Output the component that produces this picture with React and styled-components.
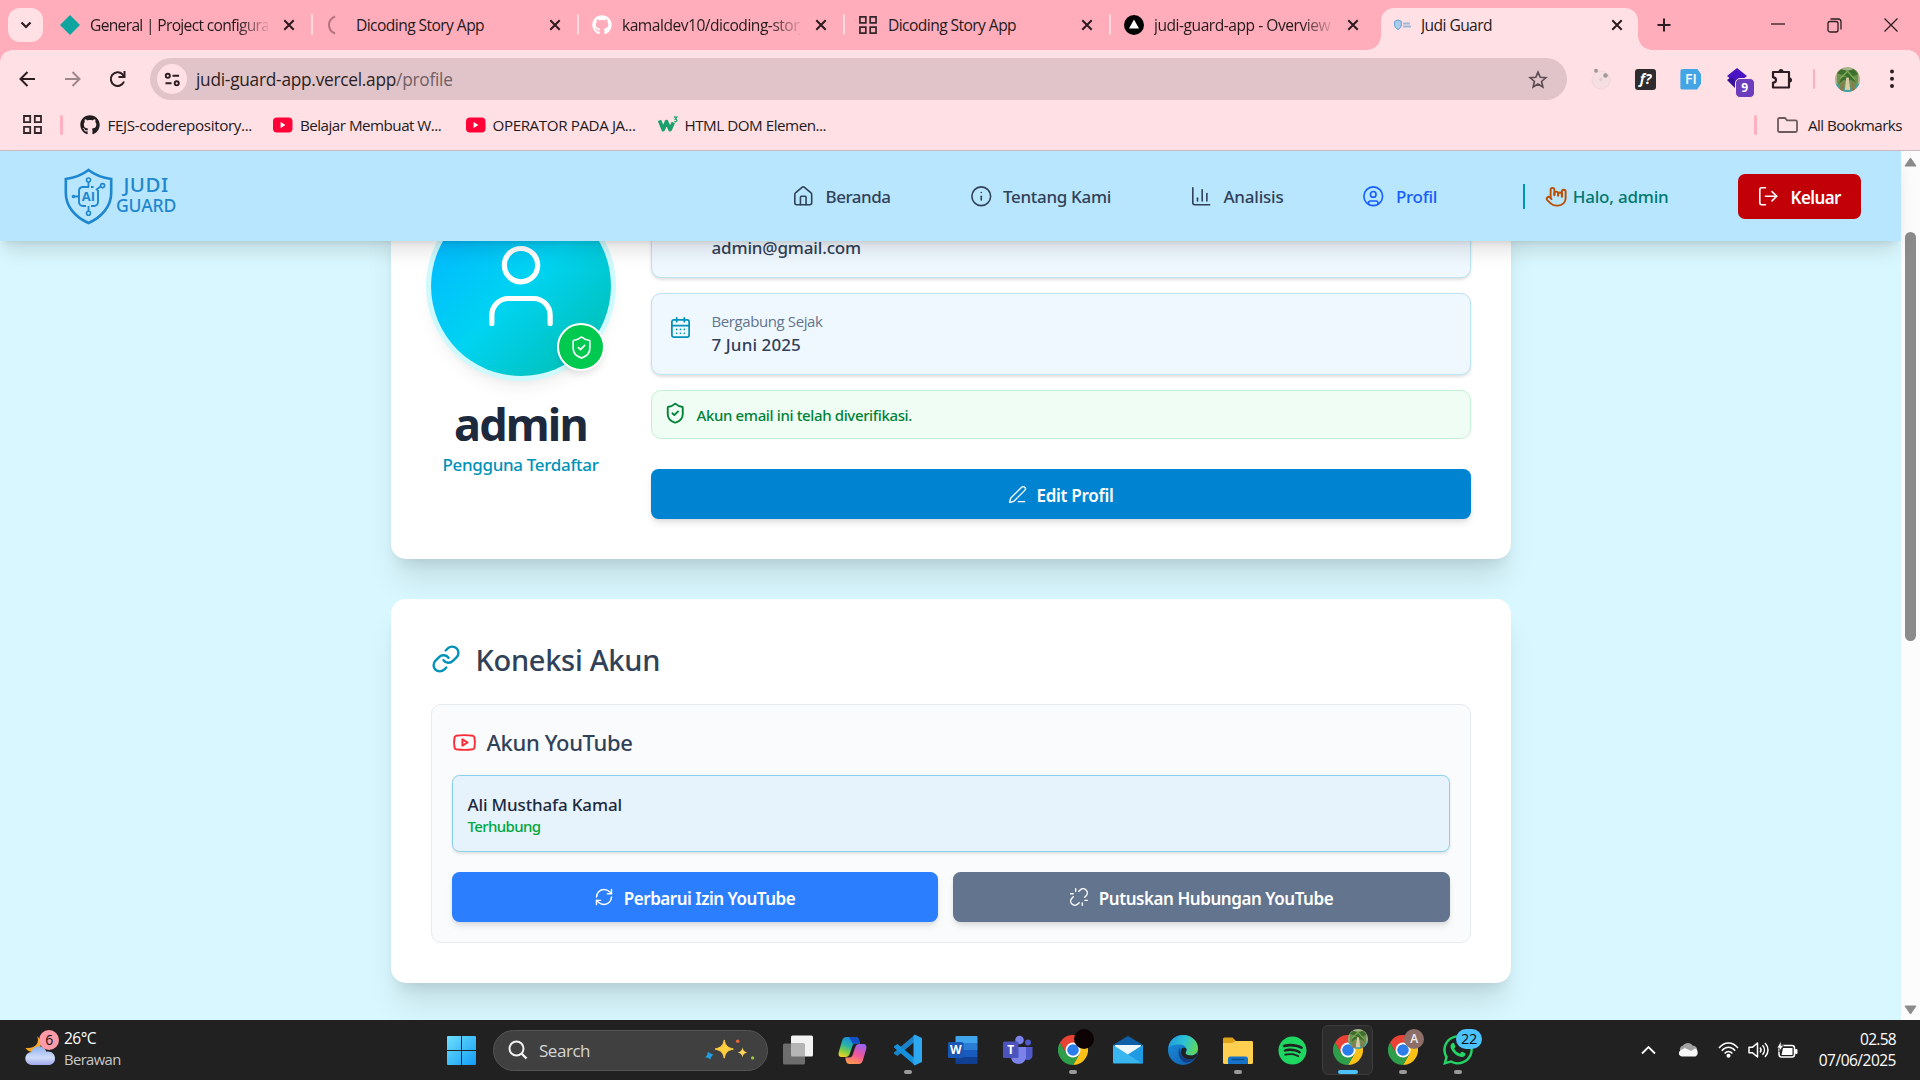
import React from "react";
import styled, { createGlobalStyle, css } from "styled-components";
import {
  House, Info, ChartColumn, CircleUser, HandMetal, LogOut, User, ShieldCheck,
  CalendarDays, PenLine, Link, Youtube, RefreshCw, Unlink,
} from "lucide-react";
import { FaGithub, FaSpotify, FaWhatsapp } from "react-icons/fa";

const GlobalStyle = createGlobalStyle`
  *, *::before, *::after { box-sizing: border-box; }
  body { margin: 0; overflow: hidden; font-family: "Open Sans", "Noto Sans", sans-serif; }
  svg { display: block; flex: none; }
`;

const Screen = styled.div`
  width: 1920px;
  height: 1080px;
  display: flex;
  flex-direction: column;
  overflow: hidden;
`;

const Label = styled.span`
  flex: none;
  white-space: nowrap;
  padding-top: ${(p) => p.$drop || 0}px;
  font-family: ${(p) => (p.$weight ? '"Noto Sans", "Open Sans"' : '"Open Sans", "Noto Sans"')}, sans-serif;
  font-size: ${(p) => p.$size}px;
  font-weight: ${(p) => p.$weight || 400};
  letter-spacing: ${(p) => p.$track || 0}px;
  line-height: ${(p) => p.$line || 24}px;
  color: ${(p) => p.$color || "#231a1c"};
`;

/* ---------- Browser chrome ---------- */

const TabStrip = styled.div`
  flex: none;
  height: 50px;
  display: flex;
  align-items: flex-start;
  background: #ffadbb;
`;

const TabSearch = styled.div`
  width: 35px;
  height: 34px;
  margin: 8px 3px 0 8px;
  display: grid;
  place-items: center;
  border-radius: 12px;
  background: #ffe0e5;
`;

const TabBox = styled.div`
  position: relative;
  flex: none;
  width: 266px;
  height: 50px;
  padding-left: 14px;
  display: flex;
  align-items: center;
  ${(p) => p.$divided && css`
    &::after {
      content: "";
      position: absolute;
      right: -1px;
      top: 14px;
      width: 2px;
      height: 21px;
      border-radius: 1px;
      background: #ffd9df;
    }
  `}
`;

const ActiveTab = styled.div`
  position: relative;
  flex: none;
  width: 257px;
  height: 42px;
  margin: 8px 5px 0 5px;
  padding: 0 0 8px 12px;
  display: flex;
  align-items: center;
  background: #ffe0e5;
  border-radius: 13px 13px 0 0;
  &::before, &::after {
    content: "";
    position: absolute;
    bottom: 0;
    width: 14px;
    height: 14px;
  }
  &::before { left: -14px; background: radial-gradient(circle at 0 0, transparent 13.5px, #ffe0e5 14px); }
  &::after { right: -14px; background: radial-gradient(circle at 100% 0, transparent 13.5px, #ffe0e5 14px); }
`;

const Favicon = styled.div`
  width: 20px;
  height: 20px;
  margin-right: ${(p) => p.$gap || 10}px;
  display: grid;
  place-items: center;
  flex: none;
`;

const TabTitle = styled.div`
  width: ${(p) => p.$width || 178}px;
  overflow: hidden;
  display: flex;
  ${(p) => p.$fade && css`mask-image: linear-gradient(90deg, #000 calc(100% - 30px), transparent calc(100% + 4px));`}
`;

const CloseSlot = styled.div`
  width: 42px;
  display: grid;
  place-items: center;
  margin-bottom: 1px;
`;

const WindowButtons = styled.div`
  margin-left: auto;
  margin-right: 22px;
  height: 50px;
  display: flex;
  align-items: center;
  gap: 42px;
`;

const Toolbar = styled.div`
  flex: none;
  height: 58px;
  padding: 0 16px 0 18px;
  display: flex;
  align-items: center;
  background: #ffe0e5;
  position: relative;
  &::before {
    content: "";
    position: absolute;
    inset: 0 0 auto 0;
    height: 12px;
    z-index: 0;
    background:
      radial-gradient(circle at 12px 12px, transparent 11.5px, #ffadbb 12px) left / 12px 12px no-repeat,
      radial-gradient(circle at 0 12px, transparent 11.5px, #ffadbb 12px) right / 12px 12px no-repeat;
  }
`;

const NavIcons = styled.div`
  width: 132px;
  display: flex;
  gap: 27px;
`;

const Omnibox = styled.div`
  width: 1417px;
  height: 42px;
  padding: 0 19px 0 7px;
  display: flex;
  align-items: center;
  border-radius: 21px;
  background: #e1c4ca;
`;

const SiteInfo = styled.div`
  width: 30px;
  height: 30px;
  margin-right: 9px;
  display: grid;
  place-items: center;
  border-radius: 50%;
  background: #ffe0e5;
`;

const Grow = styled.div`flex: 1;`;

const Extensions = styled.div`
  margin-left: 23px;
  display: flex;
  align-items: center;
`;

const ExtSlot = styled.div`
  position: relative;
  width: 45.2px;
  height: 30px;
  display: flex;
  align-items: center;
`;

const ExtTile = styled.div`
  width: 21px;
  height: 21px;
  display: grid;
  place-items: center;
  border-radius: 3px;
  background: ${(p) => p.$bg};
  color: #fff;
  font: ${(p) => p.$font};
  line-height: 20px;
  clip-path: ${(p) => p.$clip || "none"};
`;

const ExtBadge = styled.div`
  position: absolute;
  left: 9px;
  top: 14px;
  width: 20px;
  height: 20px;
  border: 1px solid #ffe0e5;
  border-radius: 5px;
  background: #6b3dbd;
  color: #fff;
  font: 700 12px/18px "Open Sans", sans-serif;
  text-align: center;
`;

const VRule = styled.div`
  width: 2.5px;
  height: ${(p) => p.$height}px;
  margin: ${(p) => p.$margin || 0};
  border-radius: 2px;
  background: #ffb0be;
`;

const Avatar = styled.div`
  width: ${(p) => p.$size}px;
  height: ${(p) => p.$size}px;
  margin-right: auto;
  overflow: hidden;
  border-radius: 50%;
`;

const Bookmarks = styled.div`
  flex: none;
  height: 43px;
  padding: 0 18px 9px 22.5px;
  display: flex;
  align-items: center;
  background: #ffe0e5;
  border-bottom: 1px solid #cdb9c1;
`;

const Bookmark = styled.div`
  width: ${(p) => p.$width}px;
  display: flex;
  align-items: center;
  gap: ${(p) => p.$gap || 8}px;
`;

/* ---------- Page ---------- */

const Viewport = styled.div`
  flex: none;
  height: 869px;
  display: flex;
`;

const Page = styled.div`
  width: 1901px;
  display: flex;
  flex-direction: column;
  background: #d9f7fe;
`;

const Header = styled.header`
  position: relative;
  z-index: 2;
  flex: none;
  height: 90px;
  padding: 0 40px 0 64px;
  display: flex;
  align-items: center;
  background: #b8e6fe;
  box-shadow: 0 12.5px 18.75px -3.75px rgba(0, 0, 0, 0.12), 0 5px 7.5px -5px rgba(0, 0, 0, 0.12);
`;

const Brand = styled.div`
  display: flex;
  align-items: center;
  gap: 3px;
  width: 728px;
`;

const BrandName = styled.div`
  height: 46px;
  display: flex;
  flex-direction: column;
  align-items: center;
  justify-content: space-between;
  padding: 1px 0 5px;
`;

const NavLinks = styled.nav`
  display: flex;
  gap: 79px;
`;

const NavLink = styled.div`
  display: flex;
  align-items: center;
  gap: 11px;
  color: ${(p) => (p.$active ? "#155dfc" : "#314158")};
`;

const Greeting = styled.div`
  height: 25px;
  margin-left: 86px;
  padding-left: 20px;
  display: flex;
  align-items: center;
  gap: 5px;
  border-left: 2px solid #0092b8;
  color: #bb4d00;
`;

const LogoutButton = styled.button`
  width: 123px;
  height: 45px;
  margin-left: auto;
  padding: 0 0 0 19px;
  display: flex;
  align-items: center;
  gap: 11px;
  border: 0;
  border-radius: 7px;
  background: #c10007;
  color: #fff;
`;

const Main = styled.main`
  flex: 1;
  min-height: 0;
  overflow: hidden;
  padding-bottom: 37px;
  display: flex;
  flex-direction: column;
  justify-content: flex-end;
  align-items: center;
  gap: 40px;
`;

const Card = styled.section`
  flex: none;
  width: 1120px;
  padding: 40px;
  border-radius: 15px;
  background: #fff;
  box-shadow: 0 25px 31.25px -6.25px rgba(0, 0, 0, 0.1), 0 10px 12.5px -7.5px rgba(0, 0, 0, 0.1);
`;

const ProfileCard = styled(Card)`
  height: 403px;
  display: flex;
  gap: 40px;
`;

const Identity = styled.div`
  width: 180px;
  display: flex;
  flex-direction: column;
  align-items: center;
`;

const ProfileAvatar = styled.div`
  position: relative;
  width: 180px;
  height: 180px;
  margin-bottom: 20px;
  display: grid;
  place-items: center;
  border-radius: 50%;
  color: #fff;
  background: linear-gradient(135deg, #00bcff 15%, #00d3f2 50%, #00bba7 100%);
  box-shadow: 0 0 0 5px #cefafe, 0 12.5px 18.75px -3.75px rgba(0, 0, 0, 0.08), 0 5px 10px 0 rgba(0, 0, 0, 0.04);
`;

const VerifiedBadge = styled.div`
  position: absolute;
  right: 5.5px;
  bottom: 5px;
  width: 48px;
  height: 48px;
  display: grid;
  place-items: center;
  border: 2px solid #fff;
  border-radius: 50%;
  background: #00c950;
  box-shadow: 0 5px 7px -1px rgba(0, 0, 0, 0.1);
`;

const Details = styled.div`
  flex: 1;
  display: flex;
  flex-direction: column;
  gap: 15px;
`;

const InfoRow = styled.div`
  flex: none;
  height: 82px;
  padding: 15px;
  display: flex;
  gap: 18px;
  border: 1px solid #bce4f2;
  border-radius: 10px;
  background: #f0f8ff;
  box-shadow: 0 1.5px 3px rgba(0, 0, 0, 0.12);
  color: #0092b8;
`;

const IconCell = styled.div`
  width: 27px;
  padding: 7px 0 0 2px;
`;

const Stack = styled.div`
  display: flex;
  flex-direction: column;
`;

const Notice = styled.div`
  height: 49px;
  padding: 0 12.5px 2px;
  display: flex;
  align-items: center;
  gap: 10px;
  border: 1px solid #c3f0d4;
  border-radius: 10px;
  background: #f0fdf4;
  color: #008236;
`;

const Button = styled.button`
  flex: none;
  width: ${(p) => p.$width || "auto"};
  height: 50px;
  padding: 0;
  margin-top: ${(p) => p.$top || 0}px;
  display: flex;
  align-items: center;
  justify-content: center;
  gap: 10px;
  border: 0;
  border-radius: 7.5px;
  background: ${(p) => p.$bg};
  color: #fff;
  box-shadow: 0 5px 7.5px -1px rgba(0, 0, 0, 0.1), 0 2.5px 5px -2.5px rgba(0, 0, 0, 0.1);
`;

const ConnectionCard = styled(Card)`
  height: 384px;
`;

const SectionTitle = styled.div`
  height: 65px;
  padding-bottom: 25px;
  display: flex;
  align-items: center;
  gap: 15px;
  color: #0092b8;
`;

const YoutubePanel = styled.div`
  height: 239px;
  padding: 20px;
  border: 1px solid #e6ebf0;
  border-radius: 10px;
  background: #f9fbfd;
`;

const PanelTitle = styled.div`
  height: 50px;
  padding-bottom: 16px;
  display: flex;
  align-items: center;
  gap: 10px;
  color: #fb2c36;
`;

const Channel = styled.div`
  height: 77px;
  padding: 17px 15px;
  display: flex;
  flex-direction: column;
  border: 1px solid #86d0ee;
  border-radius: 7.5px;
  background: #e6f3fd;
  box-shadow: 0 1.5px 3px rgba(0, 0, 0, 0.1);
`;

const ButtonRow = styled.div`
  display: flex;
  gap: 15px;
  margin-top: 20px;
`;

const Scrollbar = styled.div`
  width: 19px;
  padding: 6px 4px 5px;
  display: flex;
  flex-direction: column;
  align-items: center;
  background: #fcfcfc;
`;

const Thumb = styled.div`
  width: 11px;
  height: 409px;
  margin: 65px 0 auto;
  border-radius: 6px;
  background: #8b8b8b;
`;

/* ---------- Taskbar ---------- */

const Taskbar = styled.div`
  flex: none;
  height: 60px;
  padding: 0 24px 0 25px;
  display: flex;
  align-items: center;
  background: #212121;
`;

const Weather = styled.div`
  width: 422px;
  padding-bottom: 3px;
  display: flex;
  align-items: center;
  gap: 9px;
`;

const WeatherIcon = styled.div`
  position: relative;
  width: 30px;
  height: 34px;
`;

const SearchPill = styled.div`
  width: 275px;
  height: 41px;
  margin-left: 17px;
  padding: 0 12px 0 14px;
  display: flex;
  align-items: center;
  gap: 11px;
  border: 1px solid #555;
  border-radius: 22px;
  background: #404040;
`;

const Apps = styled.div`
  display: flex;
  margin-left: 2px;
`;

const AppSlot = styled.div`
  position: relative;
  width: 55px;
  height: 60px;
  display: grid;
  place-items: center;
  ${(p) => p.$active && css`
    &::before {
      content: "";
      position: absolute;
      inset: 5px 2px;
      border: 1px solid #3c3c3c;
      border-radius: 6px;
      background: #2c2c2c;
    }
    svg { position: relative; }
  `}
  ${(p) => p.$run && css`
    &::after {
      content: "";
      position: absolute;
      bottom: 6px;
      left: 50%;
      width: ${p.$active ? 20 : 8}px;
      height: 4px;
      border-radius: 2px;
      transform: translateX(-50%);
      background: ${p.$active ? "#4cc2ff" : "#9a9a9a"};
    }
  `}
`;

const Badge = styled.div`
  position: absolute;
  left: ${(p) => p.$left}px;
  top: ${(p) => p.$top}px;
  width: ${(p) => p.$width || 20}px;
  height: 20px;
  overflow: hidden;
  border-radius: 10px;
  background: ${(p) => p.$bg};
  color: ${(p) => p.$color || "#111"};
  font: ${(p) => p.$weight || 400} ${(p) => p.$size || 14}px/19px "Open Sans", sans-serif;
  letter-spacing: -0.4px;
  text-align: center;
`;

const Tray = styled.div`
  margin-left: auto;
  display: flex;
  align-items: center;
`;

const Clock = styled.div`
  width: 98px;
  padding-bottom: 2px;
  display: flex;
  flex-direction: column;
  align-items: flex-end;
`;

/* ---------- Drawings ---------- */

const CloseX = () => (
  <svg width="12" height="12" viewBox="0 0 12 12"><path d="M1.3 1.3l9.4 9.4M10.7 1.3L1.3 10.7" stroke="#2b1a1e" strokeWidth="2" /></svg>
);

const AppGrid = ({ size = 19 }) => (
  <svg width={size} height={size} viewBox="0 0 19 19" fill="none" stroke="#33262a" strokeWidth="1.8">
    <path d="M1 1h6.2v6.2H1zM11.8 1H18v6.2h-6.2zM1 11.8h6.2V18H1zM11.8 11.8H18V18h-6.2z" />
  </svg>
);

const YoutubeMark = () => (
  <svg width="20" height="16" viewBox="0 0 20 16"><rect y="0.5" width="19.5" height="15" rx="4" fill="#ff0338" /><path d="M7.6 5l4.8 3-4.8 3z" fill="#fff" /></svg>
);

const W3Mark = () => (
  <svg width="20" height="18" viewBox="0 0 20 18" fill="none" stroke="#1aa06a">
    <path d="M1.5 4.5l3.800 9.200 3.200-8.200 3.600 8.200 3.200-7.200" strokeWidth="3.600" strokeLinejoin="round" />
    <path d="M15.800 1.200h3l-1.600 2c3 .2 1.800 3.400-1.200 2.300" strokeWidth="1.200" />
  </svg>
);

const Palm = ({ size }) => (
  <svg width={size} height={size} viewBox="0 0 24 24">
    <rect width="24" height="24" fill="#a6b48a" />
    <path d="M0 16h24v8H0z" fill="#3aa5a8" />
    <path d="M2 3h20v12l-3 5H5l-3-5z" fill="#6f9050" />
    <path d="M12 9L2 6l4-4 6 2 6-2 4 5-5 2 3 6-5-3-3 3-3-3-5 4 2-6z" fill="#3c6e2c" />
    <path d="M5 11l7-7 7 8" fill="none" stroke="#7fae55" strokeWidth="1.300" />
    <path d="M10.800 10h2.400l1.400 12H9.400z" fill="#d9cba6" />
    <path d="M7 13l2 10H4zM17 13l-2 10h5z" fill="#8b7a50" />
  </svg>
);

const Shield = () => (
  <svg width="49" height="57" viewBox="0 0 49 57" fill="none" stroke="#1f87d0">
    <path d="M24.500 2C18 7 10 10 1.800 11v14c0 13 9 24 22.700 30C38 49 47.200 38 47.200 25V11C39 10 31 7 24.500 2z" strokeWidth="2.600" />
    <path d="M19.500 19h-1a4 4 0 0 0-3.500 4v11a4 4 0 0 0 4 4h3M27 19h2.500M34 22v12a4 4 0 0 1-4 4h-3" strokeWidth="1.900" />
    <path d="M19 19h6M24.500 19v-5M24.500 38v5M15 28.500h-5M32 22l4.500-3.500" strokeWidth="1.800" />
    <circle cx="24.500" cy="12" r="2" strokeWidth="1.600" />
    <circle cx="24.500" cy="45.300" r="2" strokeWidth="1.600" />
    <circle cx="38.600" cy="17.600" r="2" strokeWidth="1.600" />
    <circle cx="9.400" cy="28.500" r="1" strokeWidth="1.600" />
    <text x="24.500" y="33.200" textAnchor="middle" fill="#1f87d0" stroke="none" fontFamily="Open Sans, sans-serif" fontWeight="700" fontSize="13">AI</text>
  </svg>
);

const Chrome = () => (
  <svg width="30" height="30" viewBox="0 0 48 48">
    <path d="M24 12h20.800A24 24 0 0 1 24 48l10.400-18z" fill="#fbc116" />
    <path d="M13.600 30L3.200 12A24 24 0 0 0 24 48l10.400-18z" fill="#2f9e4b" />
    <path d="M3.200 12A24 24 0 0 1 44.800 12H24L13.600 30z" fill="#ea4335" />
    <circle cx="24" cy="24" r="12" fill="#fff" />
    <circle cx="24" cy="24" r="9.300" fill="#2b7de9" />
  </svg>
);

const Windows = () => (
  <svg width="29" height="29" viewBox="0 0 29 29">
    <defs><linearGradient id="win" x1="0" y1="0" x2="1" y2="1"><stop stopColor="#6fe0fd" /><stop offset="1" stopColor="#119cf5" /></linearGradient></defs>
    <path d="M1 0h13v14H0V1a1 1 0 0 1 1-1zM15 0h13a1 1 0 0 1 1 1v13H15zM0 15h14v14H1a1 1 0 0 1-1-1zM15 15h14v13a1 1 0 0 1-1 1H15z" fill="url(#win)" />
  </svg>
);

const Sparkles = () => (
  <svg width="50" height="24" viewBox="0 0 52 24">
    <path d="M20 1.500c1.300 6 3 7.800 9.500 9.500-6.500 1.700-8.200 3.500-9.500 9.500-1.300-6-3-7.800-9.500-9.500C17 9.300 18.700 7.500 20 1.500z" fill="#ffcf3f" stroke="#ffcf3f" strokeWidth="1" strokeLinejoin="round" />
    <path d="M39 9.500c.7 3.200 1.800 4.200 4.800 5-3 .8-4.100 1.800-4.800 5-.7-3.200-1.800-4.200-4.800-5 3-.8 4.100-1.800 4.800-5z" fill="#ffd45a" />
    <path d="M3 14l2.500 1.500L8.500 17l-2 2-1 3L3 20l-3-.500 2.200-2z" fill="#1f9fe0" />
    <circle cx="34" cy="3" r="1.800" fill="#e8683a" /><circle cx="49.500" cy="20.300" r="1.700" fill="#9bc53d" />
  </svg>
);

const TaskView = () => (
  <svg width="30" height="30" viewBox="0 0 30 30"><rect x="8" y="0.500" width="22" height="21" rx="1.500" fill="#f2f2f2" /><rect y="8.500" width="22" height="21" rx="1.500" fill="#6d6d6d" /><path d="M8 8.500h12.500A1.500 1.500 0 0 1 22 10v11.500H9.500A1.500 1.500 0 0 1 8 20z" fill="#b5b5b5" /></svg>
);

const Copilot = () => (
  <svg width="29" height="29" viewBox="0 0 29 29">
    <defs>
      <linearGradient id="cpa" x1="0.600" y1="0" x2="0.200" y2="1"><stop stopColor="#1687e8" /><stop offset="0.450" stopColor="#2bb3a5" /><stop offset="0.750" stopColor="#8ccf3c" /><stop offset="1" stopColor="#f4cf2b" /></linearGradient>
      <linearGradient id="cpb" x1="0.700" y1="0" x2="0.300" y2="1"><stop stopColor="#9b62f0" /><stop offset="0.500" stopColor="#f0559b" /><stop offset="1" stopColor="#ff9a4d" /></linearGradient>
    </defs>
    <path d="M8.500 1h9c2 0 3 1 3.500 3l.8 3.500h-4c-2 0-3 1-3.600 3L12 17c-.8 2.600-2 4-4.500 4H4C1 21 0 19 .8 16L4 5c.8-2.800 2-4 4.500-4z" fill="url(#cpa)" />
    <path d="M11 1h6.500c2 0 3 1 3.500 3l.8 3.500h-4c-1.200 0-2 .3-2.600 1z" fill="#1350c8" />
    <path d="M20.500 28h-9c-2 0-3-1-3.500-3l-.8-3.500h4c2 0 3-1 3.600-3L17 12c.8-2.600 2-4 4.500-4H25c3 0 4 2 3.200 5L25 24c-.8 2.800-2 4-4.500 4z" fill="url(#cpb)" />
  </svg>
);

const Vscode = () => (
  <svg width="30" height="32" viewBox="0 0 30 32">
    <path d="M22 7.500L4.500 22 1 19.800V18.500L21.500 1z" fill="#1c82c8" />
    <path d="M22 24.500L4.500 10 1 12.200v1.300L21.500 31z" fill="#1590dc" />
    <path d="M21.500.500L29 4v24l-7.500 3.500L20.500 30V2z" fill="#2ba8f0" />
  </svg>
);

const Word = () => (
  <svg width="30" height="30" viewBox="0 0 30 30">
    <path d="M8.500 1h20a1 1 0 0 1 1 1v6H7.500V2a1 1 0 0 1 1-1z" fill="#41a5ee" /><path d="M7.500 8h22v7h-22z" fill="#2b7cd3" /><path d="M7.500 15h22v7h-22z" fill="#185abd" /><path d="M7.500 22h22v6a1 1 0 0 1-1 1h-20a1 1 0 0 1-1-1z" fill="#103f91" />
    <rect y="7" width="15.500" height="16" rx="1.500" fill="#1a56b4" />
    <text x="7.700" y="19.300" textAnchor="middle" fill="#fff" fontFamily="Open Sans, sans-serif" fontWeight="700" fontSize="12">W</text>
  </svg>
);

const Teams = () => (
  <svg width="30" height="30" viewBox="0 0 30 30">
    <circle cx="25" cy="7.500" r="3" fill="#5059c9" /><circle cx="16.500" cy="5" r="4.300" fill="#7b83eb" />
    <path d="M20 12h9.500v8c0 3-2 5-4.700 5S20 23 20 20z" fill="#5059c9" /><path d="M8 12h15v9.500c0 4.500-3.300 7.500-7.500 7.500S8 26 8 21.500z" fill="#7b83eb" />
    <rect y="6.500" width="15.500" height="16.500" rx="1.500" fill="#4b53bc" />
    <text x="7.700" y="19" textAnchor="middle" fill="#fff" fontFamily="Open Sans, sans-serif" fontWeight="700" fontSize="12">T</text>
  </svg>
);

const Mail = () => (
  <svg width="30" height="28" viewBox="0 0 30 28"><path d="M0 9L14 .500q1-.500 2 0L30 9v18H0z" fill="#0f5ea8" /><path d="M2 9h26v12H2z" fill="#eef6fc" /><path d="M0 9l15 9.500L30 9v17.500a1 1 0 0 1-1 1H1a1 1 0 0 1-1-1z" fill="#39b5f0" /><path d="M15 18.500L30 9v17.500a1 1 0 0 1-1 1z" fill="#1f9be4" /></svg>
);

const Edge = () => (
  <svg width="30" height="30" viewBox="0 0 30 30">
    <defs>
      <linearGradient id="eda" x1="0" y1="0.300" x2="1" y2="0.600"><stop stopColor="#1f9be0" /><stop offset="0.500" stopColor="#2cc3d5" /><stop offset="1" stopColor="#61d957" /></linearGradient>
      <linearGradient id="edb" x1="0" y1="0" x2="0.800" y2="1"><stop stopColor="#1a93dd" /><stop offset="1" stopColor="#1260b4" /></linearGradient>
    </defs>
    <circle cx="15" cy="15" r="15" fill="url(#edb)" />
    <path d="M.300 13C1.500 5 7.500 0 15 0c8.500 0 15 6 15 13 0 5-3.500 7.500-7.500 7.500-3 0-5-1-5-2.500 0-.8 1-1.300 1-3.300 0-3-3-5.200-7-5.200C6 9.500 1.500 11 .300 13z" fill="url(#eda)" />
    <path d="M12 12.500c-2 3-2.500 9 2.500 13.500 3 2.700 9 2 12-2.500-5 2-12.500.5-14-5-.5-2-.3-4-.5-6z" fill="#123f86" />
    <path d="M17.500 18c0 1.500 2 2.500 5 2.500 2.500 0 4.700-.9 6-2.600l.5 3.100-2.500 2.500c-5 2-12 .5-13.500-5-.6-2.600.300-4.700 1.700-5.500 2-.8 4 .3 3.800 1.700-.1 1.800-1 2.300-1 3.300z" fill="#212121" />
  </svg>
);

const Explorer = () => (
  <svg width="30" height="27" viewBox="0 0 30 27"><path d="M0 2a1.500 1.500 0 0 1 1.500-1.500h8L13 4h15.500A1.500 1.500 0 0 1 30 5.500V12H0z" fill="#dfa21b" /><path d="M0 6h9.500l3-2h16A1.500 1.500 0 0 1 30 5.500v20a1.500 1.500 0 0 1-1.500 1.500h-27A1.500 1.500 0 0 1 0 25.500z" fill="#ffcf4f" /><path d="M5 27v-5a2.500 2.500 0 0 1 2.500-2.500h15A2.500 2.500 0 0 1 25 22v5z" fill="#1573c8" /><path d="M9.500 22.500h11" stroke="#0d4f94" strokeWidth="1.500" strokeLinecap="round" /></svg>
);

const Cloudy = () => (
  <svg width="30" height="34" viewBox="0 0 30 34">
    <defs><linearGradient id="cl" x1="0" y1="0" x2="0" y2="1"><stop stopColor="#8fb0ee" /><stop offset="0.600" stopColor="#cfdcf8" /><stop offset="1" stopColor="#9fa8ec" /></linearGradient></defs>
    <path d="M12 4c3 6-1 13-11.500 12C3 20 8 21 12 19s6-10 0-15z" fill="#f7a723" />
    <path d="M7 33a6.500 6.500 0 0 1-.5-13C7.500 16 10.500 14.500 14 14.500s6.500 2 7.200 5.200C26.500 19 30 22 30 26.500c0 4-3 6.500-6.500 6.500z" fill="url(#cl)" />
  </svg>
);

const line = { fill: "none", stroke: "#2b1d21", strokeWidth: 2 };

const tabs = [
  { title: "General | Project configuration", track: -0.68, fade: true, icon: <svg width="20" height="20" viewBox="0 0 20 20"><path d="M10 0l10 10-10 10L0 10z" fill="#0ea5a0" /></svg> },
  { title: "Dicoding Story App", track: -0.57, icon: <svg width="20" height="20" viewBox="0 0 20 20"><path d="M9 1.500C1 5 1 15 9 18.500" fill="none" stroke="#b5737f" strokeWidth="2" /></svg> },
  { title: "kamaldev10/dicoding-story", track: -0.5, fade: true, icon: <FaGithub size={20} color="#fff" /> },
  { title: "Dicoding Story App", track: -0.57, icon: <AppGrid size={18} /> },
  { title: "judi-guard-app - Overview", track: -0.48, fade: true, icon: <svg width="20" height="20" viewBox="0 0 20 20"><circle cx="10" cy="10" r="10" /><path d="M10 4.500l5 9H5z" fill="#fff" /></svg> },
];

const bookmarks = [
  { title: "FEJS-coderepository...", track: -0.36, width: 193, icon: <FaGithub size={20} color="#221c1e" /> },
  { title: "Belajar Membuat W...", track: -0.52, width: 193, gap: 7.5, icon: <YoutubeMark /> },
  { title: "OPERATOR PADA JA...", track: -0.41, width: 192, gap: 7, icon: <YoutubeMark /> },
  { title: "HTML DOM Elemen...", track: -0.48, width: 200, gap: 7, icon: <W3Mark /> },
];

const links = [
  { title: "Beranda", track: -0.48, Icon: House },
  { title: "Tentang Kami", track: -0.32, Icon: Info },
  { title: "Analisis", track: -0.23, Icon: ChartColumn },
  { title: "Profil", track: -0.28, Icon: CircleUser, active: true },
];

const apps = [
  { icon: <TaskView /> },
  { icon: <Copilot /> },
  { icon: <Vscode />, run: true },
  { icon: <Word /> },
  { icon: <Teams /> },
  { icon: <Chrome />, run: true, badge: <Badge $left={29} $top={9} $bg="#0d0204" /> },
  { icon: <Mail /> },
  { icon: <Edge /> },
  { icon: <Explorer />, run: true },
  { icon: <FaSpotify size={29} color="#1ed760" /> },
  { icon: <Chrome />, run: true, active: true, badge: <Badge $left={28} $top={9} $bg="#6d8a4c"><Palm size={20} /></Badge> },
  { icon: <Chrome />, run: true, badge: <Badge $left={29} $top={9} $bg="#8d6e68" $color="#eee" $size={12} $weight={600}>A</Badge> },
  { icon: <FaWhatsapp size={34} color="#25d366" />, run: true, badge: <Badge $left={26} $top={9} $width={26} $bg="#4cc2ff" $size={14.5}>22</Badge> },
];

function BrowserChrome() {
  return (
    <>
      <TabStrip>
        <TabSearch>
          <svg width="12" height="8" viewBox="0 0 12 8"><path d="M1.500 1.500L6 6l4.500-4.500" {...line} strokeWidth="2.200" /></svg>
        </TabSearch>
        {tabs.map((t, i) => (
          <TabBox key={i} $divided={i < 4}>
            <Favicon>{t.icon}</Favicon>
            <TabTitle $fade={t.fade}><Label $size={15.6} $track={t.track}>{t.title}</Label></TabTitle>
            <CloseSlot><CloseX /></CloseSlot>
          </TabBox>
        ))}
        <ActiveTab>
          <Favicon $gap={8}>
            <svg width="18" height="12" viewBox="0 0 18 12" fill="none" stroke="#5f9fd0"><path d="M4 1l3.300 1.300V6c0 2-1.500 3.700-3.300 4.500C2.200 9.700.7 8 .7 6V2.300z" fill="#a9cdea" /><path d="M9 4.500h7M9 7.500h8" strokeWidth="1.800" opacity="0.600" /></svg>
          </Favicon>
          <TabTitle><Label $size={15.6} $track={-0.58}>Judi Guard</Label></TabTitle>
          <CloseSlot><CloseX /></CloseSlot>
        </ActiveTab>
        <CloseSlot>
          <svg width="14" height="50" viewBox="0 0 14 50"><path d="M7 18.500v13M.500 25h13" {...line} /></svg>
        </CloseSlot>
        <WindowButtons>
          <svg width="14" height="14" viewBox="0 0 14 14"><path d="M0 6h14" {...line} strokeWidth="1.300" /></svg>
          <svg width="15" height="15" viewBox="0 0 15 15" {...line} strokeWidth="1.300"><rect x="1" y="3.500" width="10" height="10.500" rx="2" /><path d="M3.500 1h7.500a3 3 0 0 1 3 3v7.500" /></svg>
          <svg width="14" height="14" viewBox="0 0 14 14"><path d="M.500.500l13 13M13.500.500l-13 13" {...line} strokeWidth="1.300" /></svg>
        </WindowButtons>
      </TabStrip>
      <Toolbar>
        <NavIcons>
          <svg width="18" height="18" viewBox="0 0 18 18"><path d="M17 9H3M9.500 2L2.500 9l7 7" {...line} /></svg>
          <svg width="18" height="18" viewBox="0 0 18 18" opacity="0.450"><path d="M2 9h14M9.500 2l7 7-7 7" {...line} /></svg>
          <svg width="18" height="18" viewBox="0 0 18 18"><path d="M16 11.500A6.800 6.800 0 1 1 14.500 4.300L16 6.300" {...line} /><path d="M16.500 1v6h-6" {...line} /></svg>
        </NavIcons>
        <Omnibox>
          <SiteInfo>
            <svg width="17" height="15" viewBox="0 0 18 16" {...line}><circle cx="4" cy="4" r="2.200" /><path d="M9 4h7M1.500 12H8" /><circle cx="13.500" cy="12" r="2.200" /></svg>
          </SiteInfo>
          <Label $size={17.3} $drop={1} $track={-0.26} $color="#2b1f23">judi-guard-app.vercel.app</Label>
          <Label $size={17.3} $drop={1} $track={-0.25} $color="#705f64">/profile</Label>
          <Grow />
          <svg width="20" height="19" viewBox="0 0 24 23"><path d="M12 2.500l2.700 6.300 6.800.6-5.200 4.500 1.600 6.700L12 17l-5.900 3.600 1.600-6.700L2.500 9.400l6.800-.6z" fill="none" stroke="#5d4d52" strokeWidth="2" /></svg>
        </Omnibox>
        <Extensions>
          <ExtSlot>
            <svg width="22" height="22" viewBox="0 0 22 22"><circle cx="11" cy="12" r="9" fill="#f5dfe2" stroke="#ecd6da" /><circle cx="6" cy="2.800" r="2" fill="#a39599" /><circle cx="15.500" cy="7.500" r="2.200" fill="#a39599" /><circle cx="11" cy="11.500" r="1.800" fill="#e3cfd2" /></svg>
          </ExtSlot>
          <ExtSlot><ExtTile $bg="#2e2c2e" $font='italic 700 14px "Open Sans", sans-serif'>f?</ExtTile></ExtSlot>
          <ExtSlot><ExtTile $bg="#43a5e6" $font='600 14px "Open Sans", sans-serif' $clip="polygon(0 0, 80% 0, 100% 30%, 100% 70%, 80% 100%, 0 100%)">FI</ExtTile></ExtSlot>
          <ExtSlot>
            <svg width="22" height="24" viewBox="0 0 22 24"><path d="M11 1l10 8-10 8L1 9z" fill="#4a13c4" /><path d="M1 13l4-3 6 5 4-3 6 3-10 8z" fill="#37109a" /></svg>
            <ExtBadge>9</ExtBadge>
          </ExtSlot>
          <ExtSlot>
            <svg width="22" height="22" viewBox="0 0 22 22"><path d="M2 4h16v15.500H2v-4.800c4-.3 4-5.100 0-5.400z" {...line} strokeWidth="2.200" strokeLinejoin="round" /><path d="M7.500 3.500a2.500 2.500 0 0 1 5 0zM18.500 9.500a2.500 2.500 0 0 1 0 5z" fill="#2b1d21" /></svg>
          </ExtSlot>
        </Extensions>
        <VRule $height={20} $margin="0 20px 0 -3px" />
        <Avatar $size={25}><Palm size={25} /></Avatar>
        <svg width="24" height="20" viewBox="0 0 24 20" fill="#2b1d21"><circle cx="12" cy="2.500" r="2" /><circle cx="12" cy="9.700" r="2" /><circle cx="12" cy="17" r="2" /></svg>
      </Toolbar>
      <Bookmarks>
        <AppGrid />
        <VRule $height={20} $margin="0 17px 0 18.500px" />
        {bookmarks.map((b) => (
          <Bookmark key={b.title} $width={b.width} $gap={b.gap}>{b.icon}<Label $size={15.2} $track={b.track}>{b.title}</Label></Bookmark>
        ))}
        <Grow />
        <VRule $height={20} $margin="0 20px 0 0" />
        <Bookmark $gap={10}>
          <svg width="21" height="16" viewBox="0 0 21 16"><path d="M1 2.500A1.500 1.500 0 0 1 2.500 1H8l2 2.300h8.500A1.500 1.500 0 0 1 20 4.800v8.700a1.500 1.500 0 0 1-1.500 1.500h-16A1.500 1.500 0 0 1 1 13.500z" fill="none" stroke="#6b5b60" strokeWidth="1.800" /></svg>
          <Label $size={15.2} $track={-0.55}>All Bookmarks</Label>
        </Bookmark>
      </Bookmarks>
    </>
  );
}

function SiteHeader() {
  return (
    <Header>
      <Brand>
        <Shield />
        <BrandName>
          <Label $size={20.5} $line={20} $weight={500} $track={0.5} $color="#1f87d0">JUDI</Label>
          <Label $size={17.6} $line={18} $weight={500} $track={-0.2} $color="#1f87d0">GUARD</Label>
        </BrandName>
      </Brand>
      <NavLinks>
        {links.map(({ title, track, Icon, active }) => (
          <NavLink key={title} $active={active}>
            <Icon size={22.5} strokeWidth={1.7} />
            <Label $size={17} $drop={2} $weight={500} $track={track} $color="currentColor">{title}</Label>
          </NavLink>
        ))}
      </NavLinks>
      <Greeting>
        <HandMetal size={22.5} strokeWidth={2} />
        <Label $size={17} $drop={2} $weight={500} $track={-0.2} $color="#00786f">Halo, admin</Label>
      </Greeting>
      <LogoutButton>
        <LogOut size={22.5} strokeWidth={1.7} />
        <Label $size={17} $drop={3} $weight={600} $track={-0.6} $color="#fff">Keluar</Label>
      </LogoutButton>
    </Header>
  );
}

function Profile() {
  return (
    <ProfileCard>
      <Identity>
        <ProfileAvatar>
          <User size={100} strokeWidth={1.25} />
          <VerifiedBadge><ShieldCheck size={25} strokeWidth={1.6} /></VerifiedBadge>
        </ProfileAvatar>
        <Label $size={45} $line={56} $weight={700} $track={-1.8} $color="#1d293d">admin</Label>
        <Label $size={17} $line={26} $weight={500} $track={-0.33} $color="#0092b8">Pengguna Terdaftar</Label>
      </Identity>
      <Details>
        <InfoRow>
          <IconCell />
          <Stack>
            <Label $size={15}>&nbsp;</Label>
            <Label $size={17} $weight={500} $track={-0.16} $color="#314158">admin@gmail.com</Label>
          </Stack>
        </InfoRow>
        <InfoRow>
          <IconCell><CalendarDays size={23} strokeWidth={1.8} /></IconCell>
          <Stack>
            <Label $size={15} $track={-0.4} $line={25} $color="#62748e">Bergabung Sejak</Label>
            <Label $size={17} $weight={500} $line={22} $track={0.1} $color="#314158">7 Juni 2025</Label>
          </Stack>
        </InfoRow>
        <Notice>
          <ShieldCheck size={22.5} strokeWidth={2} />
          <Label $size={15} $drop={2} $weight={500} $track={-0.37} $color="#008236">Akun email ini telah diverifikasi.</Label>
        </Notice>
        <Button $bg="#0084d1" $top={15}>
          <PenLine size={19} strokeWidth={1.7} />
          <Label $size={17} $drop={3} $weight={600} $track={-0.29} $color="#fff">Edit Profil</Label>
        </Button>
      </Details>
    </ProfileCard>
  );
}

function Connection() {
  return (
    <ConnectionCard>
      <SectionTitle>
        <Link size={30} strokeWidth={1.9} />
        <Label $size={29} $line={40} $drop={1} $weight={500} $track={-0.3} $color="#314158">Koneksi Akun</Label>
      </SectionTitle>
      <YoutubePanel>
        <PanelTitle>
          <Youtube size={25} strokeWidth={1.9} />
          <Label $size={22} $line={34} $weight={500} $track={-0.36} $color="#314158">Akun YouTube</Label>
        </PanelTitle>
        <Channel>
          <Label $size={17} $line={23} $weight={500} $track={-0.16} $color="#1d293d">Ali Musthafa Kamal</Label>
          <Label $size={15} $line={21} $weight={500} $track={-0.62} $color="#00a63e">Terhubung</Label>
        </Channel>
        <ButtonRow>
          <Button $bg="#2b7fff" $width="486px">
            <RefreshCw size={20} strokeWidth={1.7} />
            <Label $size={17} $drop={3} $weight={600} $track={-0.48} $color="#fff">Perbarui Izin YouTube</Label>
          </Button>
          <Button $bg="#62748e" $width="497px">
            <Unlink size={20} strokeWidth={1.7} />
            <Label $size={17} $drop={3} $weight={600} $track={-0.45} $color="#fff">Putuskan Hubungan YouTube</Label>
          </Button>
        </ButtonRow>
      </YoutubePanel>
    </ConnectionCard>
  );
}

function WindowsTaskbar() {
  return (
    <Taskbar>
      <Weather>
        <WeatherIcon>
          <Cloudy />
          <Badge $left={14} $top={-2} $bg="#ff9aa8">6</Badge>
        </WeatherIcon>
        <Stack>
          <Label $size={15.5} $line={21} $track={-0.5} $color="#fff">26°C</Label>
          <Label $size={14.8} $line={20} $track={-0.6} $color="#c8c8c8">Berawan</Label>
        </Stack>
      </Weather>
      <Windows />
      <SearchPill>
        <svg width="20" height="20" viewBox="0 0 20 20" fill="none" stroke="#f0f0f0" strokeWidth="2"><circle cx="8.500" cy="8.500" r="7" /><path d="M13.500 13.500l5 5" strokeWidth="2.400" /></svg>
        <Label $size={17} $drop={2} $track={-0.47} $color="#d6d6d6">Search</Label>
        <Grow />
        <Sparkles />
      </SearchPill>
      <Apps>
        {apps.map((a, i) => (
          <AppSlot key={i} $run={a.run} $active={a.active}>{a.icon}{a.badge}</AppSlot>
        ))}
      </Apps>
      <Tray>
        <svg width="37" height="14" viewBox="0 0 37 14"><path d="M1 10.500L7.500 4l6.500 6.500" fill="none" stroke="#fff" strokeWidth="1.800" /></svg>
        <svg width="40" height="16" viewBox="0 0 40 16"><path d="M4 11a4 4 0 0 1 1-7.500C7 0 13 0 14.500 3.500c4 0 6 4 4 7z" fill="#a2a2a2" /><path d="M4.500 14.500C.500 14.500-.500 10 3 8l4-2 6 3 4-2.500c3 1 4 6 .500 8z" fill="#f7f7f7" /></svg>
        <svg width="30" height="20" viewBox="0 0 30 20" fill="none" stroke="#fff" strokeWidth="1.500"><path d="M1 8c5.500-6.600 13.500-6.600 19 0M3.800 10.800c4-4.600 9.400-4.600 13.400 0M6.600 13.500c2.300-2.700 5.500-2.700 7.800 0" /><circle cx="10.500" cy="15.800" r="1.300" fill="#fff" /></svg>
        <svg width="29" height="20" viewBox="0 0 29 20" fill="none" stroke="#fff" strokeWidth="1.500"><path d="M1 7.300h3.300L9.500 3v14l-5.200-4.300H1z" strokeLinejoin="round" /><path d="M12 7.500c1.300 1.500 1.300 3.500 0 5M14.500 5.300c2.600 2.800 2.600 6.600 0 9.400M17 3c4 4.200 4 9.800 0 14" /></svg>
        <svg width="21" height="18" viewBox="0 0 21 18"><rect x="2" y="4.500" width="15.500" height="11.500" rx="2.500" fill="none" stroke="#fff" strokeWidth="1.500" /><path d="M6 7h9.500v7h-11z" fill="#fff" /><path d="M18.500 8.500H20v4h-1.500z" fill="#fff" stroke="#fff" /><path d="M4 0L0 7h2.500L2 11l4.500-6.500H4z" fill="#fff" stroke="#212121" strokeWidth="0.600" /></svg>
        <Clock>
          <Label $size={15.5} $line={21} $track={-0.7} $color="#fff">02.58</Label>
          <Label $size={15.5} $line={20} $track={-0.5} $color="#fff">07/06/2025</Label>
        </Clock>
      </Tray>
    </Taskbar>
  );
}

export default function App() {
  return (
    <Screen>
      <GlobalStyle />
      <BrowserChrome />
      <Viewport>
        <Page>
          <SiteHeader />
          <Main>
            <Profile />
            <Connection />
          </Main>
        </Page>
        <Scrollbar>
          <svg width="13" height="10" viewBox="0 0 13 10"><path d="M6.500 1L12 9H1z" fill="#8b8b8b" stroke="#8b8b8b" strokeLinejoin="round" /></svg>
          <Thumb />
          <svg width="13" height="10" viewBox="0 0 13 10"><path d="M6.500 9L12 1H1z" fill="#8b8b8b" stroke="#8b8b8b" strokeLinejoin="round" /></svg>
        </Scrollbar>
      </Viewport>
      <WindowsTaskbar />
    </Screen>
  );
}
